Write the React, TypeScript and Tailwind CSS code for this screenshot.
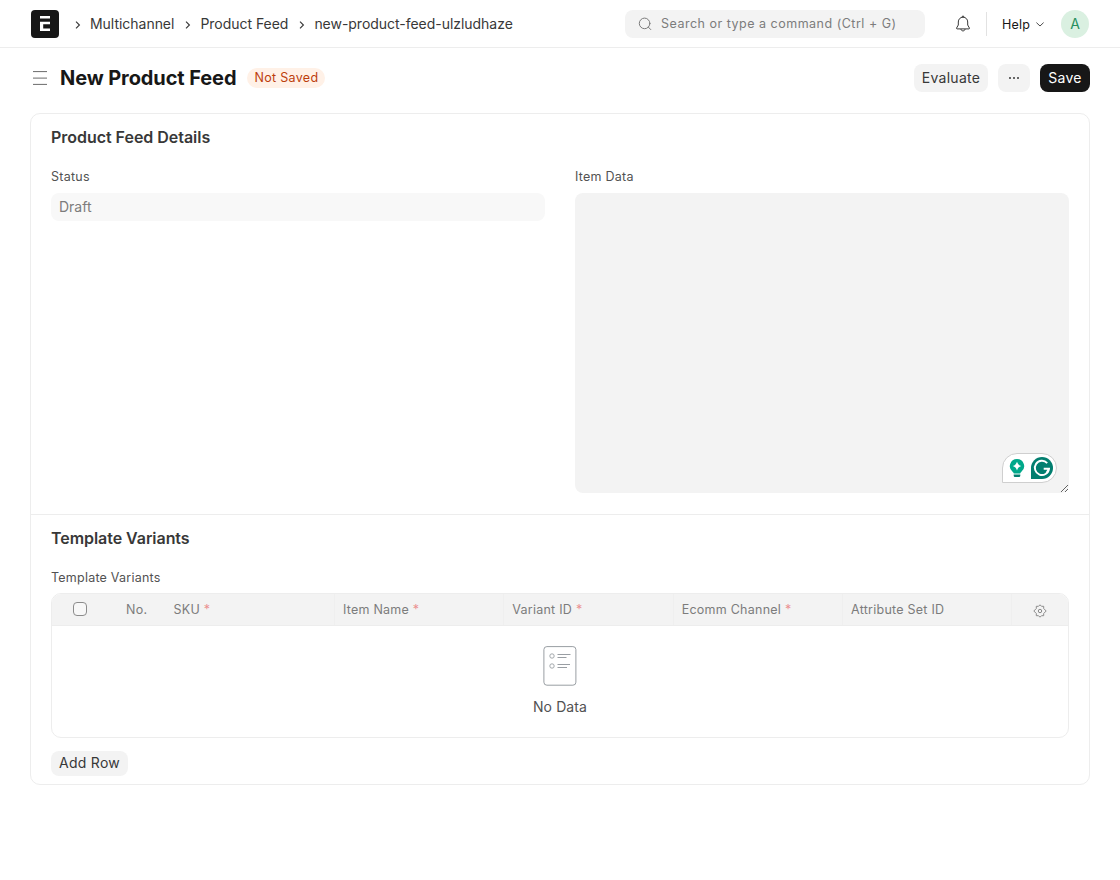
import React from "react";

const crumbs = ["Multichannel", "Product Feed", "new-product-feed-ulzludhaze"];

const columns = [
  { label: "SKU", required: true },
  { label: "Item Name", required: true },
  { label: "Variant ID", required: true },
  { label: "Ecomm Channel", required: true },
  { label: "Attribute Set ID", required: false },
];

function Logo() {
  return (
    <svg width="28" height="28" viewBox="0 0 28 28" className="shrink-0">
      <rect width="28" height="28" rx="4" fill="#171717" />
      <path d="M9 6h10v2.500H9zM9 11.700h10v2.500h-6.800v4.300H19V21H9z" fill="#fff" />
    </svg>
  );
}

function ChevronRight() {
  return (
    <svg width="6" height="8" viewBox="0 0 6 8" fill="none" stroke="#383838" strokeWidth="1.15" className="mt-[2px] shrink-0">
      <path d="M1 .7 4.4 4 1 7.3" />
    </svg>
  );
}

function Navbar() {
  return (
    <header className="flex h-12 items-center border-b border-[#ededed] px-[31px]">
      <Logo />
      <nav className="ml-[5px] flex items-center text-sm tracking-[-0.03px] text-[#383838]">
        {crumbs.map((c) => (
          <span key={c} className="flex items-center">
            <span className="ml-[10.5px] mr-[9.5px] flex">
              <ChevronRight />
            </span>
            {c}
          </span>
        ))}
      </nav>
      <div className="ml-auto flex h-7 w-[300px] items-center rounded-lg bg-[#f3f3f3] pl-[13px]">
        <svg width="14" height="14" viewBox="0 0 14 14" fill="none" stroke="#7c7c7c" strokeLinecap="round">
          <circle cx="6.6" cy="6.4" r="5.3" />
          <path d="m10.4 10.2 2.4 2.4" />
        </svg>
        <span className="ml-[9px] pt-[2px] text-[12.5px] font-[420] tracking-[0.5px] text-[#7c7c7c]">Search or type a command (Ctrl + G)</span>
      </div>
      <svg width="16" height="18" viewBox="0 0 16 18" fill="none" stroke="#383838" strokeLinejoin="round" className="ml-[30px]">
        <path d="M8 2.2c-2.8 0-4.7 2.1-4.7 4.8v3L1.6 13c-.2.5 0 .9.5.9h11.8c.5 0 .7-.4.5-.9L12.700 10V7c0-2.700-1.900-4.800-4.700-4.800ZM7.300 2.200V1.200h1.400v1M5.900 14c.2 1.200 1 1.900 2.100 1.900s1.900-.7 2.100-1.900" />
      </svg>
      <div className="ml-[15px] h-6 w-px bg-[#e2e2e2]" />
      <span className="ml-[15px] w-[28px] whitespace-nowrap pt-[3px] text-[12.5px] font-[420] tracking-[0.25px] text-[#171717]">Help</span>
      <svg width="8" height="5" viewBox="0 0 8 5" fill="none" stroke="#383838" strokeWidth=".9" className="ml-[6px] mt-[2px]">
        <path d="m.4.6 3.600 3.400 3.600-3.400" />
      </svg>
      <div className="ml-[17px] flex size-7 items-center justify-center rounded-full bg-[#daf0e1] text-sm text-[#278f5e]">A</div>
    </header>
  );
}

function PageHead() {
  return (
    <div className="flex h-[60px] items-center px-[30px]">
      <svg width="14" height="14" viewBox="0 0 14 14" stroke="#6b6b6b" className="ml-[3px]">
        <path d="M0 .6h14M0 7.100h14M0 13.400h14" />
      </svg>
      <h1 className="ml-[13px] text-[20px] font-bold tracking-[-0.1px] text-[#171717]">New Product Feed</h1>
      <span className="ml-[11px] flex h-5 items-center rounded-full bg-[#fff1e7] px-[7px] text-[12.5px] font-[420] tracking-[0.32px] text-[#bd3e0c]">
        Not Saved
      </span>
      <div className="ml-auto flex gap-[10px] text-sm tracking-[0.28px] text-[#383838]">
        <button className="h-7 w-[74px] rounded-lg bg-[#f3f3f3]">Evaluate</button>
        <button className="flex h-7 w-8 items-center justify-center rounded-lg bg-[#f3f3f3]" aria-label="Menu">
          <svg width="12" height="2" viewBox="0 0 12 2" fill="#383838">
            <circle cx="2" cy="1" r="1" />
            <circle cx="6" cy="1" r="1" />
            <circle cx="10" cy="1" r="1" />
          </svg>
        </button>
        <button className="h-7 w-[50px] rounded-lg bg-[#171717] text-white">Save</button>
      </div>
    </div>
  );
}

function WritingBadge() {
  return (
    <div className="absolute right-[12px] top-[260px] flex h-[30px] w-[55px] items-center rounded-full rounded-bl-none border border-[#cfcfcf] bg-white pl-[6px]">
      <svg width="16" height="20" viewBox="0 0 16 20" className="shrink-0">
        <path d="M8 1a7.200 7.200 0 0 0-4.200 13c.6.500.900.900 1 1.500h6.400c.1-.6.400-1 1-1.500A7.200 7.200 0 0 0 8 1Z" fill="#00a88a" />
        <path d="M4.700 16.500h6.600v.9c0 1-.7 1.600-1.600 1.600H6.300c-.900 0-1.600-.6-1.600-1.600z" fill="#027e6f" />
        <path d="M8 3.700c.9 2.500 1.800 3.500 4.300 4.400C9.800 9 8.900 10 8 12.500c-.9-2.500-1.800-3.500-4.300-4.400C6.200 7.200 7.100 6.200 8 3.700Z" fill="#fff" />
      </svg>
      <svg width="22" height="22" viewBox="0 0 22 22" className="ml-[6px] shrink-0">
        <path d="M11 0a11 11 0 1 1 0 22H0V11A11 11 0 0 1 11 0Z" fill="#027e6f" />
        <path d="M16.200 6.100A7.100 7.100 0 1 0 18 11.800h-5.300M18 11.800l-2.200 3.700" fill="none" stroke="#fff" strokeWidth="1.900" />
      </svg>
    </div>
  );
}

function Gear() {
  return (
    <svg width="14" height="14" viewBox="0 0 14 14" fill="none" stroke="#8a8a8a" strokeLinejoin="round" className="mt-[3px]">
      <path d="M5.500 2.300 7 .8l1.500 1.500h2.200v2.200L13.200 7l-2.500 2.500v2.200H8.500L7 13.200l-1.500-1.500H3.300V9.500L.8 7l2.500-2.500V2.300z" />
      <circle cx="7" cy="7" r="1.700" />
    </svg>
  );
}

function VariantsTable() {
  return (
    <div className="mt-[5px] h-[145px] overflow-hidden rounded-[10px] border border-[#ededed]">
      <div className="flex h-8 border-b border-[#ededed] bg-[#f3f3f3] text-[12.5px] font-[420] leading-[31px] tracking-[0.25px] text-[#7c7c7c]">
        <div className="flex w-[51px] shrink-0 pl-[21px] pt-[8px]">
          <span className="size-[14px] rounded-[4px] border border-[#8c8c8c] bg-[#f8f8f8]" />
        </div>
        <div className="w-[62.500px] shrink-0 pl-[23px]">No.</div>
        {columns.map((c) => (
          <div key={c.label} className="w-[169.400px] shrink-0 border-r border-[#efefef] pl-2">
            {c.label}
            {c.required && <span className="text-[#eb9091]"> *</span>}
          </div>
        ))}
        <div className="flex flex-1 items-center justify-center"><Gear /></div>
      </div>
      <div className="flex flex-col items-center pt-5">
        <svg width="34" height="40" viewBox="0 0 34 40" fill="none" stroke="#999ea3">
          <rect x=".9" y=".6" width="32" height="38.600" rx="3" />
          <circle cx="9" cy="10" r="2.200" strokeWidth=".9" />
          <circle cx="9" cy="20" r="2.200" strokeWidth=".9" />
          <path d="M14.500 8.500h13M14.500 11.500h9M14.500 18.500h12.500M14.500 21.500h9.500" />
        </svg>
        <div className="mt-[11px] text-sm tracking-[0.1px] text-[#525252]">No Data</div>
      </div>
    </div>
  );
}

export default function App() {
  return (
    <div className="min-h-[880px] bg-white font-['Inter',sans-serif]">
      <Navbar />
      <PageHead />
      <main className="mx-[30px] mt-[5px] h-[672px] rounded-[10px] border border-[#ededed]">
        <section className="h-[401px] border-b border-[#ededed] px-5 pt-[11px]">
          <h2 className="text-base font-semibold tracking-[-0.03px] text-[#383838]">Product Feed Details</h2>
          <div className="mt-[18px] grid grid-cols-2 gap-[30px]">
            <div>
              <label className="block text-[12.5px] font-[420] leading-5 tracking-[0.25px] text-[#525252]">Status</label>
              <div className="mt-[6px] flex h-7 items-center rounded-lg bg-[#f8f8f8] px-2 text-sm text-[#7c7c7c]">Draft</div>
            </div>
            <div>
              <label className="block text-[12.5px] font-[420] leading-5 tracking-[0.25px] text-[#525252]">Item Data</label>
              <div className="relative mt-[6px]">
                <textarea className="block h-[300px] w-full rounded-lg bg-[#f3f3f3]" />
                <WritingBadge />
              </div>
            </div>
          </div>
        </section>
        <section className="px-5 pt-[11px]">
          <h2 className="text-base font-semibold tracking-[-0.05px] text-[#383838]">Template Variants</h2>
          <div className="mt-[18px] text-[12.5px] font-[420] leading-5 tracking-[0.23px] text-[#525252]">Template Variants</div>
          <VariantsTable />
          <button className="mt-[13px] flex h-[25px] w-[77px] justify-center rounded-lg bg-[#f3f3f3] text-sm leading-[24px] tracking-[0.28px] text-[#383838]">Add Row</button>
        </section>
      </main>
    </div>
  );
}
